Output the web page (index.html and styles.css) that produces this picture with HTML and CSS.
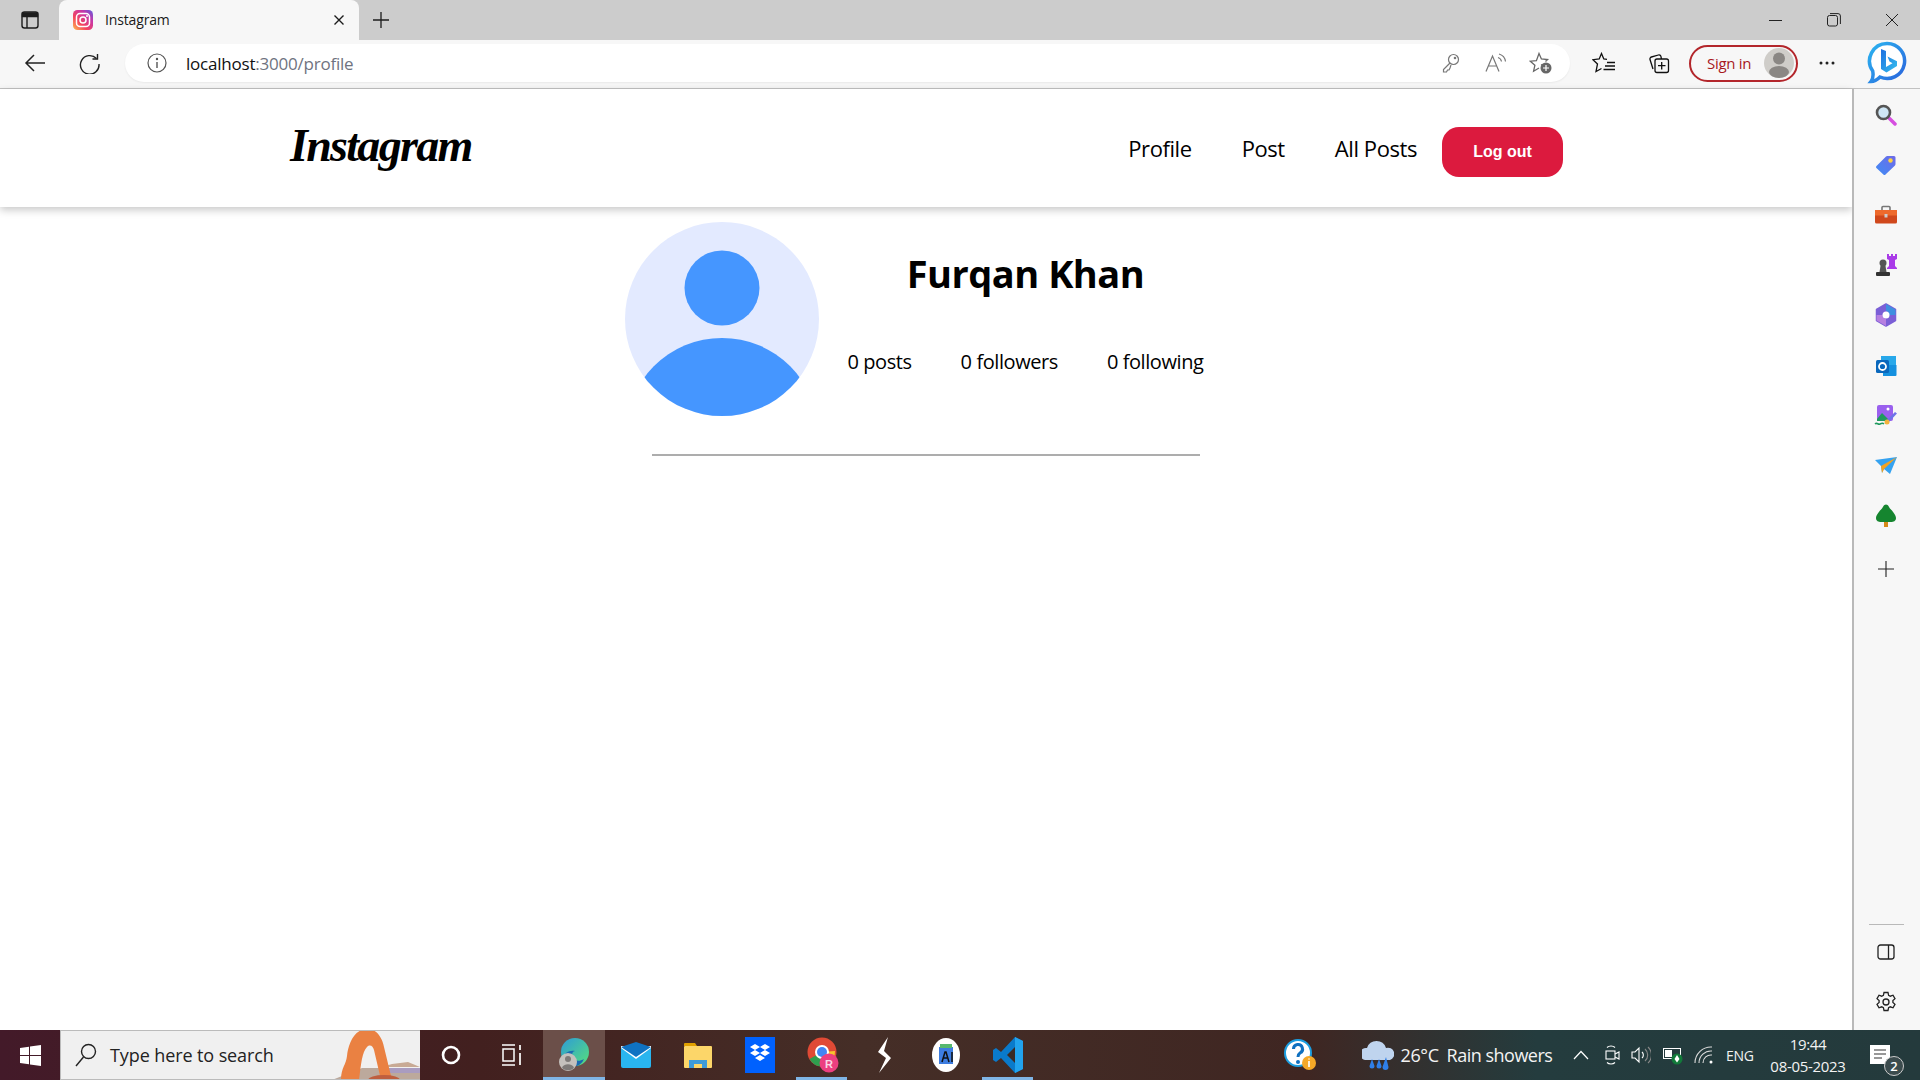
FILE: index.html
```html
<!DOCTYPE html>
<html lang="en">
<head>
<meta charset="utf-8">
<title>Instagram</title>
<link rel="stylesheet" href="styles.css">
</head>
<body>
<div class="tabstrip">
  <div class="strip-btn"><svg width="20" height="20" viewBox="0 0 20 20" fill="none" stroke="#1c1c1c" stroke-width="1.4"><rect x="2" y="2" width="16" height="16" rx="2.5"/><path d="M2.5 3h15v3.5h-15z" fill="#1c1c1c"/><path d="M7 6v12"/></svg></div>
  <div class="tab">
    <svg width="20" height="20" viewBox="0 0 20 20"><defs><linearGradient id="ig" x1="0" y1="1" x2="1" y2="0"><stop offset="0" stop-color="#fdc04f"/><stop offset=".35" stop-color="#f5455c"/><stop offset=".7" stop-color="#c737a8"/><stop offset="1" stop-color="#5b5ee0"/></linearGradient></defs><rect width="20" height="20" rx="4.5" fill="url(#ig)"/><rect x="3.5" y="3.5" width="13" height="13" rx="3.5" fill="none" stroke="#fff" stroke-width="1.5"/><circle cx="10" cy="10" r="3" fill="none" stroke="#fff" stroke-width="1.5"/><circle cx="14" cy="6" r="1" fill="#fff"/></svg>
    <span class="tab-title">Instagram</span>
    <svg class="tab-close" width="12" height="12" viewBox="0 0 12 12" stroke="#1c1c1c" stroke-width="1.4"><path d="M1.5 1.5l9 9M10.5 1.5l-9 9"/></svg>
  </div>
  <div class="new-tab"><svg width="18" height="18" viewBox="0 0 18 18" stroke="#1c1c1c" stroke-width="1.3"><path d="M9 1v16M1 9h16"/></svg></div>
  <div class="win-controls">
    <div class="win-btn"><svg width="14" height="14" viewBox="0 0 14 14" stroke="#222" stroke-width="1"><path d="M0 7.5h13"/></svg></div>
    <div class="win-btn"><svg width="14" height="14" viewBox="0 0 14 14" fill="none" stroke="#222" stroke-width="1"><rect x=".5" y="2.5" width="10" height="10.500" rx="2"/><path d="M3 .6h8a2.400 2.400 0 0 1 2.400 2.400v8"/></svg></div>
    <div class="win-btn"><svg width="14" height="14" viewBox="0 0 14 14" stroke="#222" stroke-width="1"><path d="M1 1l12 12M13 1L1 13"/></svg></div>
  </div>
</div>

<div class="toolbar">
  <div class="tb-btn"><svg width="22" height="20" viewBox="0 0 22 20" fill="none" stroke="#222" stroke-width="1.5"><path d="M21 10H2M10 2l-8 8 8 8"/></svg></div>
  <div class="tb-btn tb-reload"><svg width="21" height="21" viewBox="0 0 21 21" fill="none" stroke="#222" stroke-width="1.4"><path d="M17.500 5.500A9.300 9.300 0 1 0 20 11"/><path d="M18.500 1v5h-5"/></svg></div>
  <div class="address">
    <svg class="info" width="20" height="20" viewBox="0 0 20 20" fill="none" stroke="#555" stroke-width="1.2"><circle cx="10" cy="10" r="9"/><path d="M10 9v6" stroke-width="1.400"/><circle cx="10" cy="6" r=".6"/></svg>
    <span class="url">localhost<span class="url-dim">:3000/profile</span></span>
    <div class="addr-icons">
      <div class="addr-btn"><svg width="18" height="20" viewBox="0 0 18 20" fill="none" stroke="#777" stroke-width="1.200"><circle cx="11.500" cy="6.500" r="5"/><path d="M8 10L1.500 16.500V19h3l1-2h1.500l1-2 1-3"/><circle cx="13" cy="5" r=".7"/></svg></div>
      <div class="addr-btn"><svg width="22" height="20" viewBox="0 0 22 20" fill="none" stroke="#777" stroke-width="1.200"><path d="M1 18.500L7.500 3l6.500 15.500M3.500 13h8"/><path d="M13 4.500a5 5 0 0 1 3.500 4M14 1a9 9 0 0 1 6.500 7.500"/></svg></div>
      <div class="addr-btn"><svg width="24" height="24" viewBox="0 0 24 24"><path d="M12 13.500l1.900 1M10 17l-5.400 3.200 1.300-6-4.600-4 6.100-.6L10 2.500l2.400 5.500 6.100.6-2 1.800" fill="none" stroke="#666" stroke-width="1.300"/><circle cx="17" cy="17" r="5.500" fill="#666"/><path d="M17 14v6M14 17h6" stroke="#fff" stroke-width="1.200"/></svg></div>
    </div>
  </div>
  <div class="tb-btn tb-fav"><svg width="24" height="22" viewBox="0 0 24 22" fill="none" stroke="#111" stroke-width="1.300"><path d="M15 7.300L11.800 7 9.500 1.500 7.200 7 1 7.700l4.500 4.300L4 19.500l5.500-3"/><path d="M15 10.500h8M13 14h10M11.500 17.500H23"/></svg></div>
  <div class="tb-btn tb-coll"><svg width="22" height="22" viewBox="0 0 22 22" fill="none" stroke="#111" stroke-width="1.300"><path d="M5 17L2 7.500a2 2 0 0 1 1.400-2.500l7-2a2 2 0 0 1 2.500 1.400L13.500 7"/><rect x="7" y="7" width="13.500" height="13.500" rx="2"/><path d="M13.700 10v7.500M10 13.700h7.500"/></svg></div>
  <div class="signin">
    <span class="signin-text">Sign in</span>
    <svg width="30" height="30" viewBox="0 0 30 30"><circle cx="15" cy="15" r="15" fill="#cfcdc9"/><circle cx="15" cy="10.500" r="6" fill="#8a8784"/><ellipse cx="15" cy="24" rx="10" ry="6" fill="#8a8784"/></svg>
  </div>
  <div class="tb-btn tb-dots"><svg width="16" height="4" viewBox="0 0 16 4" fill="#222"><circle cx="2" cy="2" r="1.500"/><circle cx="8" cy="2" r="1.500"/><circle cx="14" cy="2" r="1.500"/></svg></div>
  <div class="tb-btn tb-bing"><svg width="40" height="44" viewBox="0 0 40 44"><defs><linearGradient id="bb" x1="0" y1="0" x2="1" y2="1"><stop offset="0" stop-color="#2bb4f0"/><stop offset="1" stop-color="#2a63dc"/></linearGradient><linearGradient id="bc" x1="0" y1="0" x2="1" y2="1"><stop offset="0" stop-color="#1e6fe0"/><stop offset="1" stop-color="#35c0ee"/></linearGradient></defs><path d="M20 2.500a17.500 17.500 0 1 1-7 33.500c-3 3-6 4.500-9 4.500 2-2.500 2.500-6 1.700-10.500A17.500 17.500 0 0 1 20 2.500z" fill="#fff" stroke="url(#bb)" stroke-width="3.500"/><path d="M14 8l5 2v16l6.500-3.800-3-1.700-2-5 9.500 4.800v4.700l-10.500 6.500L14 28z" fill="url(#bc)"/></svg></div>
</div>

<div class="workarea">
  <main class="page">
    <nav class="navbar">
      <a class="logo">Instagram</a>
      <ul class="nav-links">
        <li>Profile</li>
        <li>Post</li>
        <li>All Posts</li>
      </ul>
      <button class="logout">Log out</button>
    </nav>
    <section class="profile">
      <div class="profile-head">
        <svg class="avatar" width="194" height="194" viewBox="0 0 194 194"><defs><clipPath id="av"><circle cx="97" cy="97" r="97"/></clipPath></defs><circle cx="97" cy="97" r="97" fill="#e3eaff"/><circle cx="97" cy="66" r="37.500" fill="#4596ff"/><circle cx="97" cy="212.500" r="96.500" fill="#4596ff" clip-path="url(#av)"/></svg>
        <div class="profile-info">
          <h1 class="profile-name">Furqan Khan</h1>
          <div class="stats">
            <span>0 posts</span>
            <span>0 followers</span>
            <span>0 following</span>
          </div>
        </div>
      </div>
      <hr class="divider">
    </section>
  </main>

  <aside class="sidepanel">
    <div class="side-btn"><svg width="22" height="22" viewBox="0 0 22 22"><path d="M13.500 13.500L20 20" stroke="#d64fe0" stroke-width="3.500" stroke-linecap="round"/><circle cx="8.500" cy="8.500" r="6.500" fill="#cfe6f5" stroke="#555" stroke-width="2.600"/></svg></div>
    <div class="side-btn"><svg width="22" height="22" viewBox="0 0 22 22"><defs><linearGradient id="tag" x1="0" y1="1" x2="1" y2="0"><stop offset="0" stop-color="#3f8cf5"/><stop offset="1" stop-color="#6f6ae8"/></linearGradient></defs><path d="M1.500 12L11 2.500a2 2 0 0 1 1.500-.5H19a1.500 1.500 0 0 1 1.500 1.500V10a2 2 0 0 1-.5 1.400L10.500 20.500a1.500 1.500 0 0 1-2.100 0l-7-6.400a1.500 1.500 0 0 1 .1-2.100z" fill="url(#tag)"/><circle cx="15.500" cy="6.500" r="2.200" fill="#ffd23f"/></svg></div>
    <div class="side-btn"><svg width="24" height="20" viewBox="0 0 24 20"><path d="M8 5V2.500A1 1 0 0 1 9 1.500h6a1 1 0 0 1 1 1V5" fill="none" stroke="#777" stroke-width="1.600"/><rect x="1" y="5" width="22" height="13.500" rx="1.500" fill="#d0481c"/><rect x="1" y="5" width="22" height="5.500" fill="#ee6a2c"/><rect x="10.500" y="9" width="3" height="3.500" fill="#ccc"/></svg></div>
    <div class="side-btn"><svg width="24" height="24" viewBox="0 0 24 24"><path d="M13 1h2v2h2V1h2v2h2V1h2v5l-2 1v6l2 2v1H13v-1l2-2V7l-2-1z" fill="#a93be8"/><circle cx="9" cy="10" r="3.500" fill="#555"/><path d="M6.500 13h5l1 6h-7z" fill="#555"/><rect x="2" y="19" width="14" height="4" rx="1" fill="#333"/></svg></div>
    <div class="side-btn"><svg width="22" height="24" viewBox="0 0 22 24"><path d="M11 1l9.500 5.500v11L11 23l-9.500-5.500v-11z" fill="#7b5fd6" stroke="#7b5fd6" stroke-linejoin="round" stroke-width="1.500"/><path d="M11 1l9.500 5.500V12H14a4 4 0 0 0-3-4z" fill="#3f8fe0"/><path d="M1.500 12h6a4 4 0 0 0 3.500 4v7l-9.500-5.500z" fill="#b67fe0"/><circle cx="11" cy="12" r="3.500" fill="#fff"/></svg></div>
    <div class="side-btn"><svg width="22" height="22" viewBox="0 0 22 22"><rect x="6" y="1" width="15" height="10" fill="#28a8ea"/><path d="M8 10h13.500v10a1 1 0 0 1-1 1H8z" fill="#1490df"/><rect x="1" y="5" width="13" height="13" rx="1.500" fill="#0a68bd"/><circle cx="7.500" cy="11.500" r="3.500" fill="none" stroke="#fff" stroke-width="1.800"/></svg></div>
    <div class="side-btn"><svg width="24" height="24" viewBox="0 0 24 24"><rect x="3" y="1" width="16" height="16" rx="2" fill="#9a60ee"/><path d="M3 15l5-6 6 6v2H3z" fill="#1f9a5e"/><circle cx="14" cy="5" r="1.500" fill="#fff"/><path d="M12 17L21 8l2 1.500-9 9.500z" fill="#6d73e8"/><circle cx="13" cy="18" r="2.500" fill="#f2b33d"/><path d="M1 20c2-2 3 1 5 0s3-1 4 0" fill="none" stroke="#1f9a5e" stroke-width="1.500"/></svg></div>
    <div class="side-btn"><svg width="24" height="18" viewBox="0 0 24 18"><path d="M1 3l22-3-7 17-6-5-2 4-1-7z" fill="#35a2f0"/><path d="M23 0L7 9l1 7 2-4z" fill="#f4a21f"/></svg></div>
    <div class="side-btn"><svg width="22" height="24" viewBox="0 0 22 24"><path d="M9 18h4v5H9z" fill="#d68a18"/><path d="M11 0.500c2.500 0 3 3 4.500 4.500s5.500 6 5.500 9c0 3-2.500 4-5 4H6c-2.500 0-5-1-5-4 0-3 4-7.500 5.500-9S8.500.5 11 .5z" fill="#15852f"/></svg></div>
    <div class="side-btn side-add"><svg width="16" height="16" viewBox="0 0 16 16" stroke="#222" stroke-width="1.100"><path d="M8 0v16M0 8h16"/></svg></div>
    <div class="side-bottom">
      <hr class="side-rule">
      <div class="side-btn"><svg width="18" height="16" viewBox="0 0 18 16" fill="none" stroke="#222" stroke-width="1.300"><rect x="1" y="1" width="16" height="14" rx="2.500"/><path d="M11.500 1v14"/></svg></div>
      <div class="side-btn"><svg width="22" height="22" viewBox="0 0 22 22" fill="none" stroke="#222" stroke-width="1.300"><path d="M9 1.500h4l.6 2.800 1.700.9 2.700-1 2 3.500-2.100 1.900v1.800l2.100 1.900-2 3.500-2.700-1-1.700.9-.6 2.800H9l-.6-2.800-1.700-.9-2.700 1-2-3.500 2.100-1.900V9.600L2 7.700l2-3.500 2.700 1 1.700-.9z"/><circle cx="11" cy="11" r="3"/></svg></div>
    </div>
  </aside>
</div>

<footer class="taskbar">
  <div class="start"><svg width="21" height="21" viewBox="0 0 21 21" fill="#fff"><path d="M0 3l9-1.300V10H0zM10 1.500L21 0v10H10zM0 11h9v8.300L0 18zM10 11h11v10l-11-1.500z"/></svg></div>
  <div class="search">
    <svg width="22" height="24" viewBox="0 0 22 24" fill="none" stroke="#222" stroke-width="1.400"><circle cx="13.500" cy="8.500" r="7"/><path d="M8.500 14L1 23"/></svg>
    <span class="search-text">Type here to search</span>
    <svg class="search-art" width="88" height="50" viewBox="0 0 88 50"><path d="M0 50l30-12h58v12z" fill="#bca99c"/><path d="M50 38h38v5H50z" fill="#a99cc0"/><path d="M60 34l16-2 12 5H50z" fill="#c8aa95"/><path d="M9 50c0-12 5-15 6-24 1-10 6-26 19-27 10-1 16 8 18 18l8 33H49L42 20c-1-4-4-6-7-3-5 5-6 18-8 33z" fill="#ea8142"/><ellipse cx="52" cy="50" rx="16" ry="5" fill="#bf5f3f"/></svg>
  </div>
  <div class="tile tile-narrow"><svg width="20" height="20" viewBox="0 0 20 20" fill="none" stroke="#fff" stroke-width="2.600"><circle cx="10" cy="10" r="8"/></svg></div>
  <div class="tile"><svg width="20" height="22" viewBox="0 0 20 22" fill="none" stroke="#fff" stroke-width="1.500"><path d="M0 1h13M0 21h13"/><rect x="1" y="5" width="11" height="12"/><path d="M18 1v5M18 9v12" stroke-width="1.700"/></svg></div>
  <div class="tile tile-active"><svg width="32" height="36" viewBox="0 0 32 36"><defs><linearGradient id="ed" x1="0" y1="0" x2="1" y2="1"><stop offset="0" stop-color="#2d9bd8"/><stop offset="1" stop-color="#57e07a"/></linearGradient></defs><circle cx="17" cy="15" r="14" fill="url(#ed)"/><path d="M5 21a11 11 0 0 0 21 1c-5 3-10 2-11-2-2-3 0-6 2-6-6-1-11 2-12 7z" fill="#1a6ab0"/><circle cx="10" cy="25" r="9" fill="#c4c1bd"/><circle cx="10" cy="22" r="3" fill="#7d7a78"/><path d="M4 31c1-5 11-5 12 0-3 3-9 3-12 0z" fill="#7d7a78"/></svg></div>
  <div class="tile"><svg width="30" height="26" viewBox="0 0 30 26"><rect y="4" width="30" height="22" rx="2" fill="#29b5ef"/><path d="M0 6l15 11L30 6V4H0z" fill="#fff"/><path d="M0 5L15 0l15 5-15 10z" fill="#0f72c2"/></svg></div>
  <div class="tile"><svg width="28" height="26" viewBox="0 0 28 26"><path d="M0 2a1 1 0 0 1 1-1h10l2 3H0z" fill="#e0a000"/><rect y="4" width="28" height="22" rx="1" fill="#fcd669"/><path d="M5 26v-8h18v8h-5v-4h-8v4z" fill="#3d9ad8"/></svg></div>
  <div class="tile"><svg width="30" height="36" viewBox="0 0 30 36"><rect width="30" height="36" fill="#0061fe"/><path d="M10 7l5 3-5 3-5-3zM20 7l5 3-5 3-5-3zM10 13l5 3-5 3-5-3zM20 13l5 3-5 3-5-3zM10 21l5-3 5 3-5 3z" fill="#fff"/></svg></div>
  <div class="tile tile-open"><svg class="chrome-icon" width="32" height="36" viewBox="0 0 32 36"><circle cx="15" cy="15" r="14.500" fill="#e04a35"/><path d="M15 15L2.500 22A14.500 14.500 0 0 0 15 29.500z" fill="#2f9e4e"/><path d="M15 15l13-1a14.500 14.500 0 0 1-6 12z" fill="#f6c52d"/><circle cx="15" cy="15" r="7" fill="#fff"/><circle cx="15" cy="15" r="5" fill="#4285f4"/><circle cx="22" cy="26" r="9.500" fill="#ec3f80"/><text class="chrome-badge" x="22" y="30.500" text-anchor="middle">R</text></svg></div>
  <div class="tile"><svg width="14" height="36" viewBox="0 0 14 36" fill="#fff"><path d="M11 0L1 15l8 6-7 15 12-15-7-7z"/></svg></div>
  <div class="tile"><svg width="28" height="34" viewBox="0 0 28 34"><ellipse cx="14" cy="17" rx="14" ry="17" fill="#fff"/><path d="M7 9h14v17H7z" fill="#3d7de0"/><path d="M8 6h12v4H8z" fill="#56b870"/><path d="M10 24l3-10h1l3 10M11 20h5M20 14v10" fill="none" stroke="#111" stroke-width="1.500"/></svg></div>
  <div class="tile tile-open"><svg width="30" height="36" viewBox="0 0 30 36"><path d="M22 0l8 4v28l-8 4L8 21l-5 4-3-2v-10l3-2 5 4z" fill="#0a7acb"/><path d="M22 0l8 4v28l-8 4z" fill="#22a3ee"/><path d="M22 10v16l-8-8z" fill="#3a2a25"/></svg></div>

  <div class="tray">
    <svg class="tray-help" width="32" height="34" viewBox="0 0 32 34"><circle cx="14" cy="15" r="13" fill="#fff" stroke="#1c9ee0" stroke-width="2"/><path d="M9.500 11a4.500 4.500 0 1 1 6.500 4c-1.500 1-2 2-2 4" fill="none" stroke="#0f70c0" stroke-width="3"/><circle cx="14" cy="24" r="2" fill="#0f70c0"/><circle cx="25" cy="25" r="7" fill="#f4a827"/><path d="M25 23v6M25 20.500v1" stroke="#fff" stroke-width="1.600"/></svg>
    <svg class="tray-weather" width="32" height="32" viewBox="0 0 32 32"><path d="M3 21a6 6 0 0 1 2-12 10 10 0 0 1 19 0 6 6 0 0 1 4 12z" fill="#bfd4ee"/><path d="M10 20l-2.500 7a2.500 2.500 0 0 0 5 0zM17 20l-2.500 7a2.500 2.500 0 0 0 5 0zM24 18l-3.500 10a3 3 0 0 0 6 0z" fill="#2f7fe8"/></svg>
    <span class="temp">26°C</span>
    <span class="weather-text">Rain showers</span>
    <svg class="tray-chev" width="16" height="10" viewBox="0 0 16 10" fill="none" stroke="#fff" stroke-width="1.200"><path d="M1 9l7-7.500L15 9"/></svg>
    <svg class="tray-meet" width="15" height="20" viewBox="0 0 15 20" fill="none" stroke="#fff" stroke-width="1.100"><path d="M2 2.500C4 .5 8 .5 10 2.500M2 17.500c2 2 6 2 8 0"/><rect x="1" y="6" width="9" height="8"/><path d="M10 9l4-2v7l-4-2"/></svg>
    <svg class="tray-vol" width="20" height="20" viewBox="0 0 20 20" fill="none" stroke="#fff" stroke-width="1.100"><path d="M1 7h3l4-4v14l-4-4H1z"/><path d="M11 7a4 4 0 0 1 0 6"/><path d="M14 4a8 8 0 0 1 0 12M17 2a11 11 0 0 1 0 16" stroke="#888"/></svg>
    <svg class="tray-batt" width="20" height="20" viewBox="0 0 20 20"><rect x="0.500" y="3.500" width="17" height="10" fill="none" stroke="#fff"/><rect x="2" y="5" width="7" height="7" fill="#fff"/><circle cx="14" cy="14" r="5.500" fill="#127a3a"/><path d="M14 10l2.500 4-2.500 3.500-2.500-3.500z" fill="#fff"/></svg>
    <svg class="tray-wifi" width="20" height="18" viewBox="0 0 20 18" fill="none" stroke="#ddd" stroke-width="1.100"><path d="M1 17A16 16 0 0 1 18 1M5 17A12 12 0 0 1 18 5M9 17a8 8 0 0 1 9-8" /><circle cx="17" cy="16" r="1.500" fill="#fff" stroke="none"/></svg>
    <span class="lang">ENG</span>
    <div class="clock"><span>19:44</span><span>08-05-2023</span></div>
    <div class="notif">
      <svg width="20" height="20" viewBox="0 0 20 20"><path d="M0 0h20v19H0z" fill="#fff"/><path d="M4 5h12M4 9h12M4 13h8" stroke="#333" stroke-width="1.200"/></svg>
      <span class="notif-count">2</span>
    </div>
  </div>
</footer>
</body>
</html>
```

FILE: styles.css
```css
* { box-sizing: border-box; }
html, body { margin: 0; padding: 0; height: 100%; }
body {
  width: 1920px;
  height: 1080px;
  overflow: hidden;
  display: flex;
  flex-direction: column;
  font-family: "Open Sans", "Noto Sans", sans-serif;
  background: #fff;
  color: #000;
}

/* tab strip */
.tabstrip { height: 40px; background: #cccccc; display: flex; align-items: stretch; flex: none; }
.strip-btn { width: 59px; display: flex; align-items: center; justify-content: center; }
.tab {
  width: 300px; background: #f7f7f7; border-radius: 8px 8px 0 0;
  display: flex; align-items: center; padding-left: 14px;
}
.tab-title { margin-left: 12px; margin-bottom: 2px; font-size: 14px; letter-spacing: -.15px; color: #1a1a1a; }
.tab-close { margin-left: auto; margin-right: 14px; }
.new-tab { width: 44px; display: flex; align-items: center; justify-content: center; }
.win-controls { margin-left: auto; display: flex; gap: 2px; }
.win-btn { width: 56px; display: flex; align-items: center; justify-content: center; }

/* toolbar */
.toolbar {
  height: 49px; background: #f7f7f7; border-bottom: 1px solid #c2c2c2;
  display: flex; align-items: center; padding-left: 13px; padding-bottom: 2px; flex: none;
}
.tb-btn { width: 44px; height: 40px; display: flex; align-items: center; justify-content: center; flex: none; }
.tb-btn + .tb-btn { margin-left: 11px; }
.tb-btn.tb-reload { padding-right: 2px; }
.address {
  width: 1445px; height: 38px; margin-left: 13px; background: #fff; border-radius: 19px;
  display: flex; align-items: center; padding-left: 22px; padding-right: 11px;
  box-shadow: 0 1px 2px rgba(0,0,0,.06);
}
.url { margin-left: 19px; font-size: 17px; letter-spacing: -.22px; color: #111; }
.url-dim { color: #6f7380; }
.addr-icons { margin-left: auto; display: flex; gap: 9px; }
.addr-btn { width: 36px; height: 30px; display: flex; align-items: center; justify-content: center; }
.tb-fav { margin-left: 12px; }
.signin {
  width: 109px; height: 37px; margin-left: 8px; flex: none;
  border: 2px solid #b3262b; border-radius: 19px;
  display: flex; align-items: center; justify-content: space-between;
  padding: 0 2px 0 16px;
}
.signin-text { font-size: 15px; letter-spacing: -.3px; color: #a8181d; }
.tb-dots { margin-left: 7px; }
.tb-btn.tb-bing { margin-left: 16px; }

/* work area */
.workarea { flex: 1; display: flex; min-height: 0; }
.page { flex: 1; min-width: 0; background: #fff; }
.sidepanel {
  width: 68px; flex: none; background: #f7f7f7; border-left: 2px solid #b9b9b9;
  display: flex; flex-direction: column; align-items: center; padding: 1px 2px 3px 0;
}
.side-btn { height: 50.100px; display: flex; align-items: center; justify-content: center; flex: none; }
.side-add { margin-top: 3px; }
.side-bottom { margin-top: auto; display: flex; flex-direction: column; align-items: center; }
.side-rule { width: 35px; margin: 0 0 2px; border: 0; border-top: 1px solid #b9b9b9; }

/* navbar */
.navbar {
  height: 118px; display: flex; align-items: center;
  padding: 8px 289px 0 290px;
  box-shadow: 0 3px 8px rgba(0,0,0,.22);
}
.logo {
  font-family: "Liberation Serif", serif; font-style: italic; font-weight: 700;
  font-size: 46px; letter-spacing: -1.700px; margin-top: -14px; color: #000;
}
.nav-links {
  list-style: none; margin: 0 0 8px auto; padding: 0; display: flex; gap: 50px;
  font-size: 22px; letter-spacing: -.42px;
}
.logout {
  width: 121px; height: 50px; margin-left: 25px; border: 0; border-radius: 17px;
  background: #dc1a3e; color: #fff;
  font-family: "Liberation Sans", Arial, sans-serif; font-weight: 700; font-size: 16px;
}

/* profile */
.profile { width: 603px; margin: 15px auto 0; display: flex; flex-direction: column; align-items: center; }
.profile-head { width: 100%; display: flex; gap: 29px; }
.avatar { flex: none; }
.profile-info { width: 356px; }
.profile-name {
  margin: 26px 0 0; font-size: 38px; line-height: 50px; font-weight: 700; text-align: center; letter-spacing: -.5px;
}
.stats { margin-top: 51px; display: flex; justify-content: space-between; font-size: 20px; line-height: 26px; letter-spacing: -.42px; }
.divider { width: 548px; margin: 38px 0 0; border: 0; border-top: 2px solid #adadad; }

/* taskbar */
.taskbar {
  height: 50px; flex: none; display: flex; align-items: stretch; color: #fff;
  background: linear-gradient(90deg, #431a29 0%, #42201f 25%, #452e27 45%, #3f2622 68%, #243c3e 80%, #243a3c 100%);
}
.start { width: 60px; display: flex; align-items: center; justify-content: center; }
.search {
  width: 360px; position: relative; overflow: hidden; background: #f0f0f0;
  border-top: 1px solid #bbb; border-bottom: 1px solid #bbb; border-left: 1px solid #bbb;
  display: flex; align-items: center; padding-left: 14px;
}
.search-text { margin-left: 13px; font-size: 18px; letter-spacing: -.1px; color: #222; }
.search-art { margin-left: auto; }
.tile { width: 62px; position: relative; display: flex; align-items: center; justify-content: center; flex: none; }
.tile-narrow { width: 61px; }
.tile-active { background: #6b4f49; }
.tile-active::after { content: ""; position: absolute; left: 0; right: 0; bottom: 0; height: 3px; background: #7fb5e6; }
.tile-open::after { content: ""; position: absolute; left: 5px; right: 6px; bottom: 0; height: 3px; background: #7fb5e6; }
.chrome-icon { margin-left: 2px; }
.chrome-badge { font-family: "Liberation Sans", sans-serif; font-size: 11px; font-weight: 700; fill: #f9d7e5; }
.tray { margin-left: auto; display: flex; align-items: center; }
.tray-help { margin-right: 46px; }
.tray-weather { margin-right: 7px; }
.temp, .weather-text { font-size: 18px; letter-spacing: -.5px; color: #f3f3f3; }
.temp { letter-spacing: -.4px; }
.weather-text { margin-left: 8px; }
.tray-chev { margin-left: 21px; }
.tray-meet { margin-left: 16px; }
.tray-vol { margin-left: 10.600px; }
.tray-batt { margin-left: 12px; }
.tray-wifi { margin-left: 11px; }
.lang { margin-left: 12px; font-size: 14px; letter-spacing: -.3px; color: #f3f3f3; }
.clock {
  width: 80px; margin-left: 14.400px; display: flex; flex-direction: column; align-items: center;
  font-size: 15px; line-height: 22px; letter-spacing: -.3px; color: #f3f3f3;
}
.notif { width: 52px; margin-left: 6px; margin-right: 14px; position: relative; display: flex; justify-content: center; }
.notif-count {
  position: absolute; right: 2px; top: 11px; width: 20px; height: 20px; border-radius: 50%;
  background: #3b4b4d; border: 1px solid #ccc; font-size: 13px; line-height: 18px; text-align: center; font-weight: 600;
}
```
